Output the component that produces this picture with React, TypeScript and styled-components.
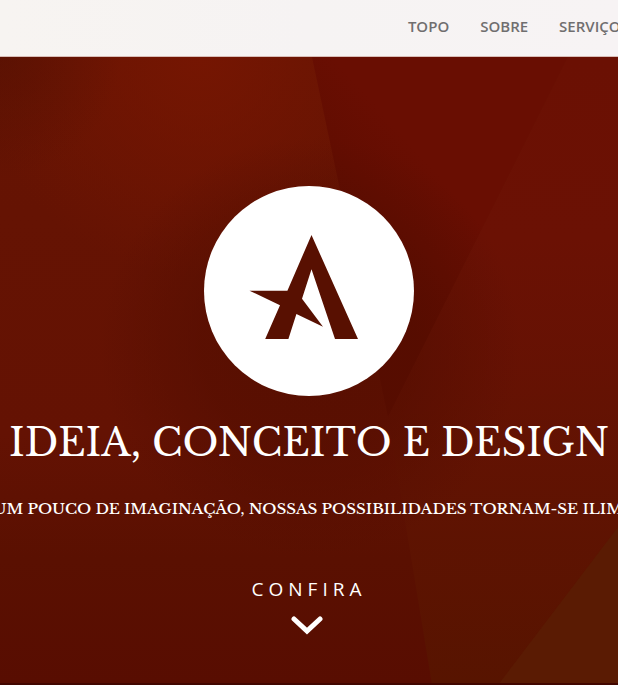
import React from "react";
import styled, { createGlobalStyle } from "styled-components";

const GlobalStyle = createGlobalStyle`
  * { box-sizing: border-box; }
  html { height: 100%; }
  body {
    margin: 0;
    height: 100%;
    background: #ffffff;
    font-family: "Open Sans", "Noto Sans", sans-serif;
    overflow: hidden;
  }
  #root { height: 100%; }
`;

const Page = styled.div`
  display: flex;
  flex-direction: column;
  min-height: 100%;
  padding-bottom: 14px;
`;

const Header = styled.header`
  display: flex;
  align-items: center;
  height: 57px;
  padding: 0 0 4px 66%;
  overflow: hidden;
  background: linear-gradient(90deg, #f7f4f1, #f6f3f3 50%, #f7f3f4);
  border-bottom: 1px solid #d9bdb7;
`;

const Nav = styled.nav`
  display: flex;
  gap: 31px;
`;

const NavLink = styled.a`
  color: #706e6f;
  font-size: 15px;
  font-weight: 600;
  line-height: 20px;
  text-decoration: none;
  white-space: nowrap;
`;

const Hero = styled.main`
  position: relative;
  display: flex;
  flex: 1;
  flex-direction: column;
  align-items: center;
  padding-top: 129px;
  overflow: hidden;
  background: #5e1002;
  color: #ffffff;
`;

const Backdrop = styled.svg`
  position: absolute;
  inset: 0;
  width: 100%;
  height: 100%;
`;

const Content = styled.div`
  position: relative;
  display: flex;
  flex-direction: column;
  align-items: center;
`;

const Logo = styled.svg`
  width: 210px;
  height: 210px;
`;

const Title = styled.h1`
  margin: 19px 0 0;
  font-family: "Libre Baskerville", "Liberation Serif", serif;
  font-size: 38px;
  font-weight: 400;
  line-height: 56px;
  white-space: nowrap;
`;

const Subtitle = styled.p`
  margin: 26px 0 0;
  font-family: "Libre Baskerville", "Liberation Serif", serif;
  font-size: 15px;
  font-weight: 500;
  line-height: 24px;
  white-space: nowrap;
`;

const MoreLink = styled.a`
  display: flex;
  flex-direction: column;
  align-items: center;
  gap: 13px;
  margin-top: 55px;
  color: #ffffff;
  font-size: 19px;
  letter-spacing: 5px;
  line-height: 26px;
  text-decoration: none;
`;

const Chevron = styled.svg`
  width: 32px;
  height: 20px;
  margin-right: 5px;
`;

const links = [
  { label: "TOPO", href: "#topo" },
  { label: "SOBRE", href: "#sobre" },
  { label: "SERVIÇOS", href: "#servicos" },
];

function Facets() {
  return (
    <Backdrop viewBox="0 0 618 628" preserveAspectRatio="none" aria-hidden="true">
      <defs>
        <linearGradient id="left" x1="0" y1="0" x2="0" y2="1">
          <stop offset="0" stopColor="#661403" />
          <stop offset="0.25" stopColor="#651303" />
          <stop offset="0.6" stopColor="#641203" />
          <stop offset="0.8" stopColor="#5a1001" />
          <stop offset="1" stopColor="#580d01" />
        </linearGradient>
        <radialGradient id="glow" cx="200" cy="0" r="220" gradientUnits="userSpaceOnUse">
          <stop offset="0" stopColor="#771602" stopOpacity="0.9" />
          <stop offset="1" stopColor="#771602" stopOpacity="0" />
        </radialGradient>
        <linearGradient id="middle" x1="350" y1="200" x2="440" y2="120" gradientUnits="userSpaceOnUse">
          <stop offset="0" stopColor="#5c0c00" />
          <stop offset="1" stopColor="#690e02" />
        </linearGradient>
        <linearGradient id="right" x1="0" y1="0" x2="0" y2="1">
          <stop offset="0" stopColor="#6b1003" />
          <stop offset="0.5" stopColor="#6b1104" />
          <stop offset="1" stopColor="#641203" />
        </linearGradient>
        <linearGradient id="lower" x1="0" y1="0" x2="0" y2="1">
          <stop offset="0" stopColor="#651203" />
          <stop offset="1" stopColor="#571400" />
        </linearGradient>
        <radialGradient id="shade" cx="310" cy="290" r="210" gradientUnits="userSpaceOnUse">
          <stop offset="0" stopColor="#520d00" stopOpacity="0.7" />
          <stop offset="0.5" stopColor="#520d00" stopOpacity="0.55" />
          <stop offset="1" stopColor="#520d00" stopOpacity="0" />
        </radialGradient>
        <radialGradient id="corner" cx="0" cy="0" r="120" gradientUnits="userSpaceOnUse">
          <stop offset="0" stopColor="#541002" stopOpacity="0.6" />
          <stop offset="1" stopColor="#541002" stopOpacity="0" />
        </radialGradient>
      </defs>
      <rect width="618" height="628" fill="url(#left)" />
      <rect width="618" height="628" fill="url(#glow)" />
      <path d="M312 0H568L388 360Z" fill="url(#middle)" />
      <path d="M568 0H618V330L388 360Z" fill="url(#right)" />
      <path d="M388 360L618 328V628H432Z" fill="url(#lower)" />
      <path d="M618 470V628H498Z" fill="#5a1b03" />
      <rect width="618" height="628" fill="url(#shade)" />
      <rect width="618" height="628" fill="url(#corner)" />
      <path d="M0 627H618" stroke="#420700" strokeWidth="2" />
    </Backdrop>
  );
}

export default function App() {
  return (
    <>
      <GlobalStyle />
      <Page>
        <Header>
          <Nav>
            {links.map((link) => (
              <NavLink key={link.href} href={link.href}>
                {link.label}
              </NavLink>
            ))}
          </Nav>
        </Header>
        <Hero id="topo">
          <Facets />
          <Content>
            <Logo viewBox="0 0 210 210" role="img" aria-label="Logo">
              <circle cx="105" cy="105" r="105" fill="#ffffff" />
              <path
                d="M107.5 49L154 153H131L107.5 83.3L98 112.7L119 140.7L92.4 128L84.4 153H61.2L76 119.3L45.5 104.7H83.4Z"
                fill="#581001"
              />
            </Logo>
            <Title>IDEIA, CONCEITO E DESIGN</Title>
            <Subtitle>
              E COM UM POUCO DE IMAGINAÇÃO, NOSSAS POSSIBILIDADES TORNAM-SE ILIMITADAS
            </Subtitle>
            <MoreLink href="#sobre">
              CONFIRA
              <Chevron viewBox="0 0 32 20" aria-hidden="true">
                <path
                  d="M3 4L16 16L29 4"
                  fill="none"
                  stroke="#ffffff"
                  strokeWidth="5"
                  strokeLinecap="round"
                />
              </Chevron>
            </MoreLink>
          </Content>
        </Hero>
      </Page>
    </>
  );
}
